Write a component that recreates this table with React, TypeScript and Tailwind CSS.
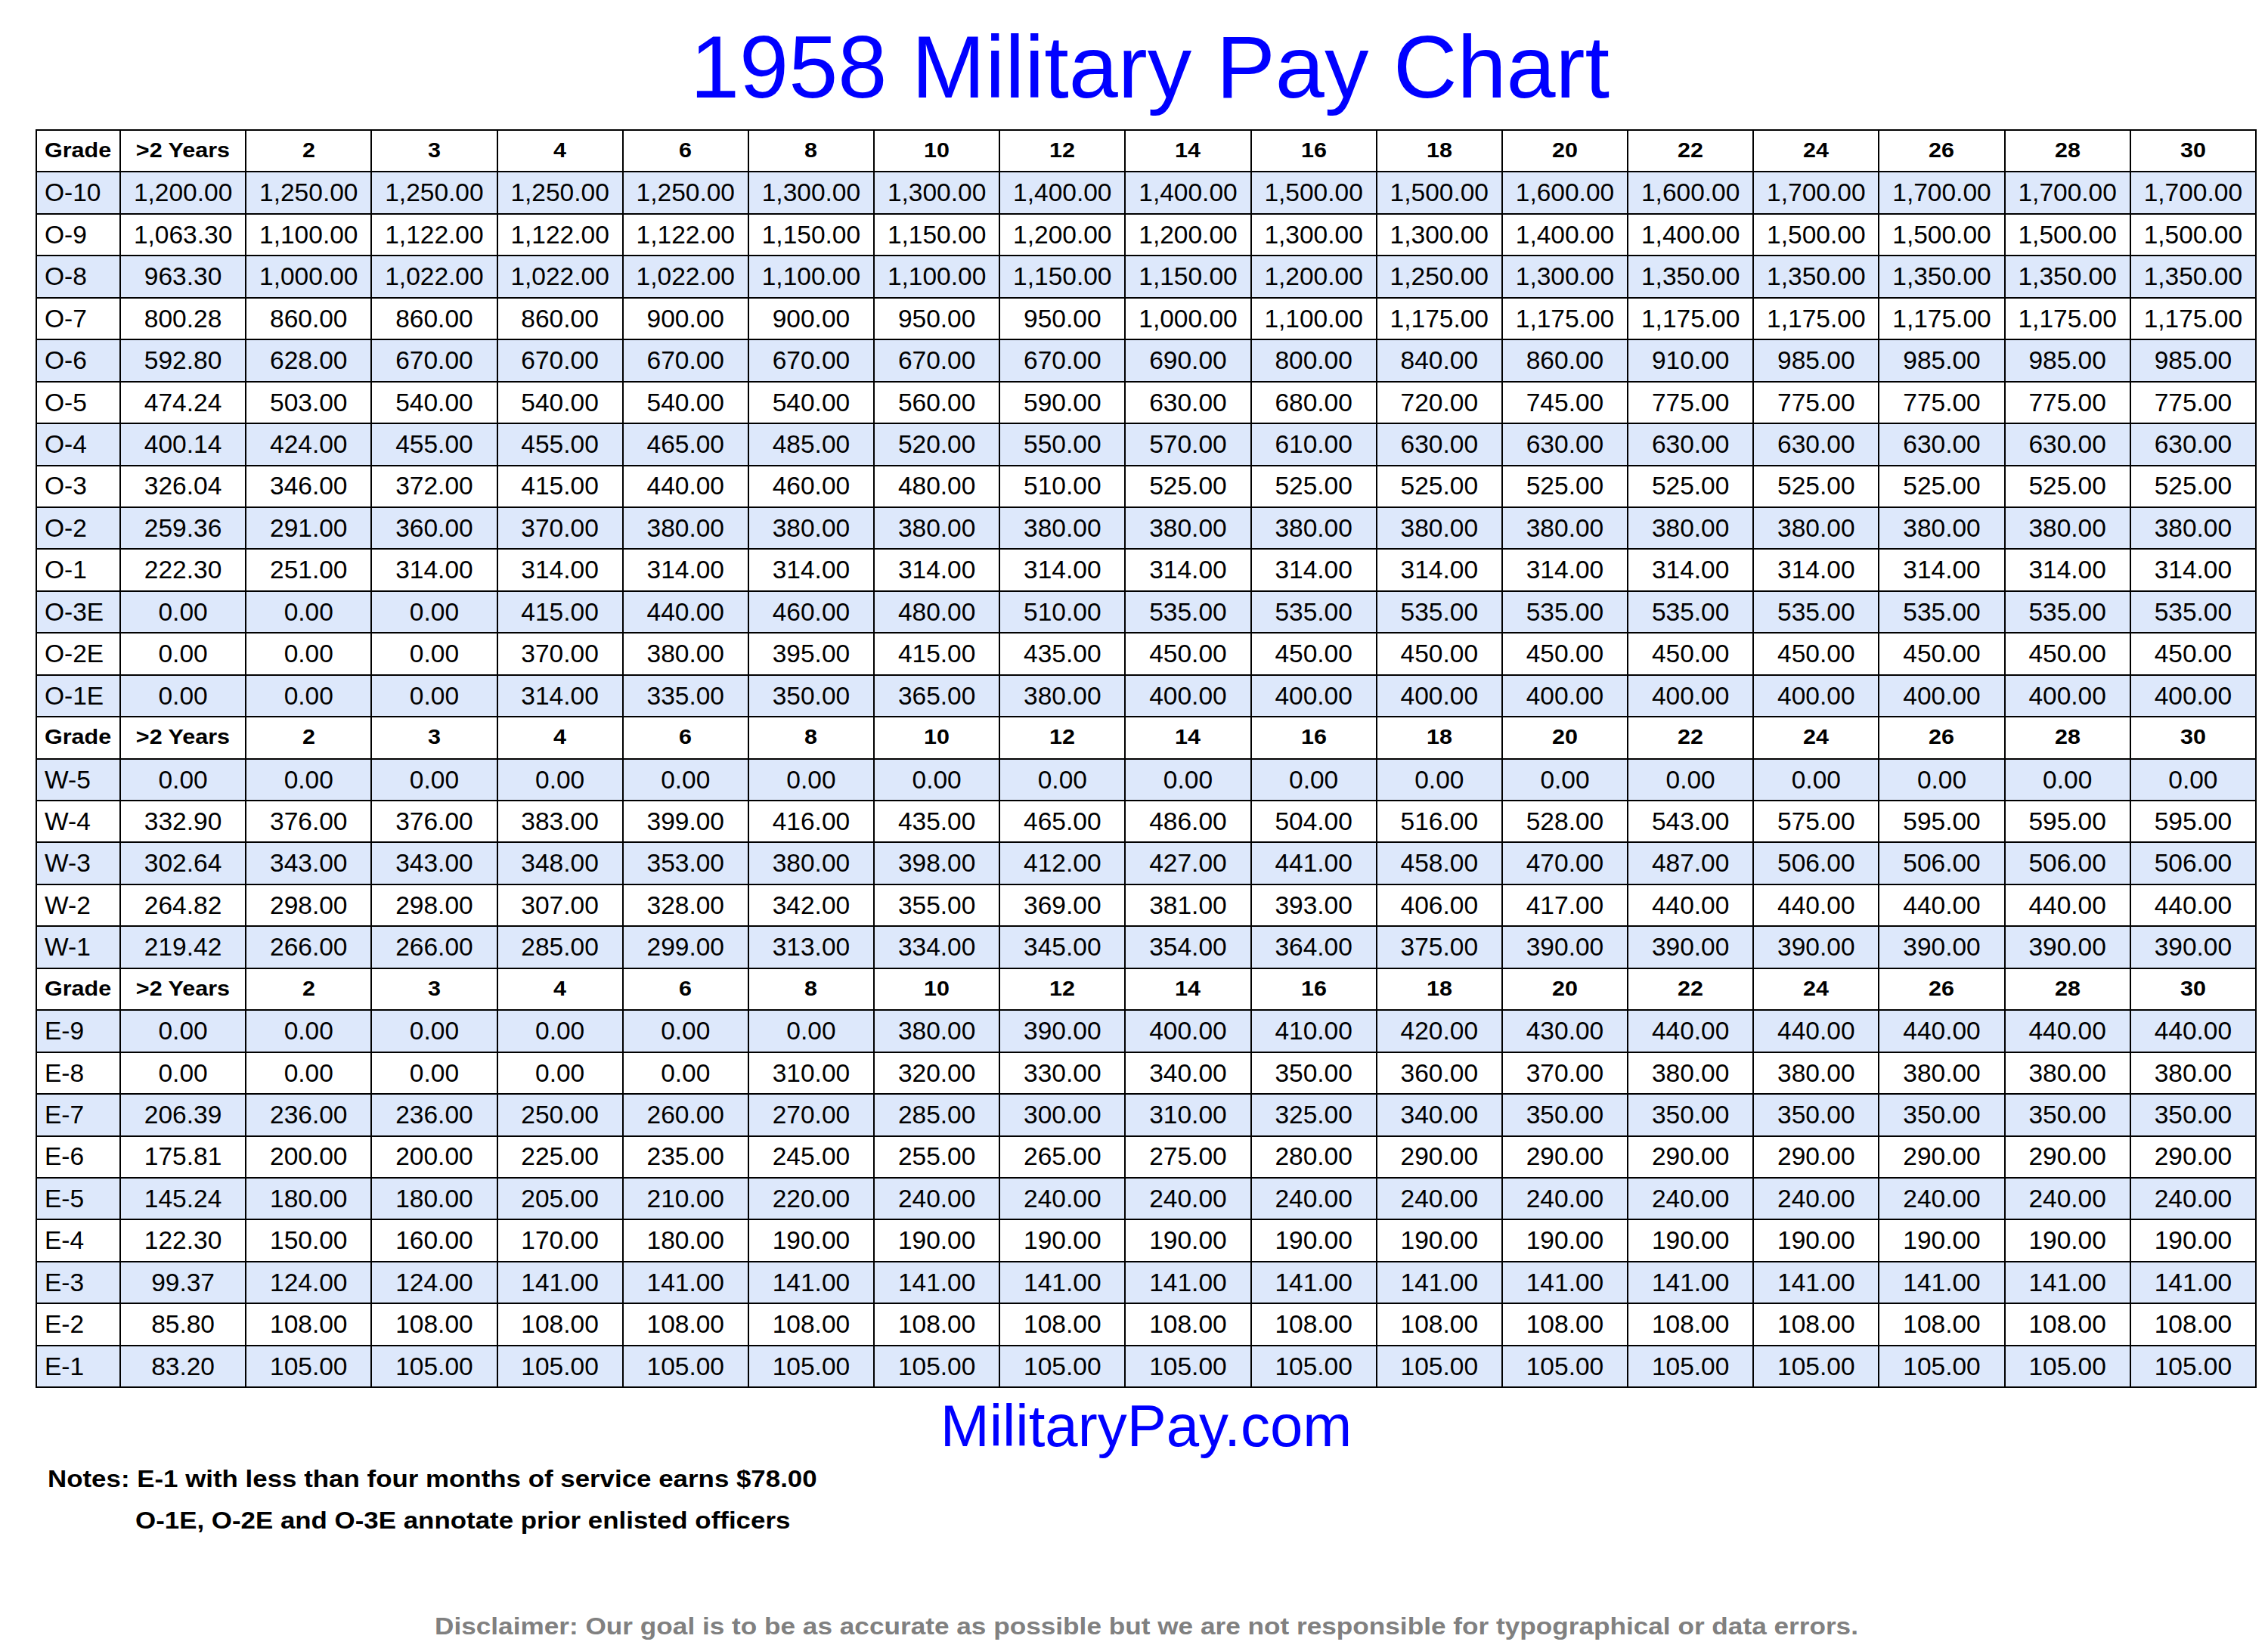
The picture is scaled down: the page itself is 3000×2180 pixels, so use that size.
import React from "react";

const headers = [">2 Years", "2", "3", "4", "6", "8", "10", "12", "14", "16", "18", "20", "22", "24", "26", "28", "30"];

const rep = (v: string, n: number) => Array.from({ length: n }, () => v);

type Row = [string, string[]];

const officers: Row[] = [
  ["O-10", ["1,200.00", "1,250.00", "1,250.00", "1,250.00", "1,250.00", "1,300.00", "1,300.00", "1,400.00", "1,400.00", "1,500.00", "1,500.00", "1,600.00", "1,600.00", "1,700.00", "1,700.00", "1,700.00", "1,700.00"]],
  ["O-9", ["1,063.30", "1,100.00", "1,122.00", "1,122.00", "1,122.00", "1,150.00", "1,150.00", "1,200.00", "1,200.00", "1,300.00", "1,300.00", "1,400.00", "1,400.00", "1,500.00", "1,500.00", "1,500.00", "1,500.00"]],
  ["O-8", ["963.30", "1,000.00", "1,022.00", "1,022.00", "1,022.00", "1,100.00", "1,100.00", "1,150.00", "1,150.00", "1,200.00", "1,250.00", "1,300.00", "1,350.00", "1,350.00", "1,350.00", "1,350.00", "1,350.00"]],
  ["O-7", ["800.28", "860.00", "860.00", "860.00", "900.00", "900.00", "950.00", "950.00", "1,000.00", "1,100.00", "1,175.00", "1,175.00", "1,175.00", "1,175.00", "1,175.00", "1,175.00", "1,175.00"]],
  ["O-6", ["592.80", "628.00", "670.00", "670.00", "670.00", "670.00", "670.00", "670.00", "690.00", "800.00", "840.00", "860.00", "910.00", "985.00", "985.00", "985.00", "985.00"]],
  ["O-5", ["474.24", "503.00", "540.00", "540.00", "540.00", "540.00", "560.00", "590.00", "630.00", "680.00", "720.00", "745.00", "775.00", "775.00", "775.00", "775.00", "775.00"]],
  ["O-4", ["400.14", "424.00", "455.00", "455.00", "465.00", "485.00", "520.00", "550.00", "570.00", "610.00", "630.00", "630.00", "630.00", "630.00", "630.00", "630.00", "630.00"]],
  ["O-3", ["326.04", "346.00", "372.00", "415.00", "440.00", "460.00", "480.00", "510.00", "525.00", "525.00", "525.00", "525.00", "525.00", "525.00", "525.00", "525.00", "525.00"]],
  ["O-2", ["259.36", "291.00", "360.00", "370.00", ...rep("380.00", 13)]],
  ["O-1", ["222.30", "251.00", ...rep("314.00", 15)]],
  ["O-3E", ["0.00", "0.00", "0.00", "415.00", "440.00", "460.00", "480.00", "510.00", ...rep("535.00", 9)]],
  ["O-2E", ["0.00", "0.00", "0.00", "370.00", "380.00", "395.00", "415.00", "435.00", ...rep("450.00", 9)]],
  ["O-1E", ["0.00", "0.00", "0.00", "314.00", "335.00", "350.00", "365.00", "380.00", ...rep("400.00", 9)]],
];

const warrant: Row[] = [
  ["W-5", rep("0.00", 17)],
  ["W-4", ["332.90", "376.00", "376.00", "383.00", "399.00", "416.00", "435.00", "465.00", "486.00", "504.00", "516.00", "528.00", "543.00", "575.00", "595.00", "595.00", "595.00"]],
  ["W-3", ["302.64", "343.00", "343.00", "348.00", "353.00", "380.00", "398.00", "412.00", "427.00", "441.00", "458.00", "470.00", "487.00", "506.00", "506.00", "506.00", "506.00"]],
  ["W-2", ["264.82", "298.00", "298.00", "307.00", "328.00", "342.00", "355.00", "369.00", "381.00", "393.00", "406.00", "417.00", "440.00", "440.00", "440.00", "440.00", "440.00"]],
  ["W-1", ["219.42", "266.00", "266.00", "285.00", "299.00", "313.00", "334.00", "345.00", "354.00", "364.00", "375.00", "390.00", "390.00", "390.00", "390.00", "390.00", "390.00"]],
];

const enlisted: Row[] = [
  ["E-9", [...rep("0.00", 6), "380.00", "390.00", "400.00", "410.00", "420.00", "430.00", ...rep("440.00", 5)]],
  ["E-8", [...rep("0.00", 5), "310.00", "320.00", "330.00", "340.00", "350.00", "360.00", "370.00", ...rep("380.00", 5)]],
  ["E-7", ["206.39", "236.00", "236.00", "250.00", "260.00", "270.00", "285.00", "300.00", "310.00", "325.00", "340.00", ...rep("350.00", 6)]],
  ["E-6", ["175.81", "200.00", "200.00", "225.00", "235.00", "245.00", "255.00", "265.00", "275.00", "280.00", ...rep("290.00", 7)]],
  ["E-5", ["145.24", "180.00", "180.00", "205.00", "210.00", "220.00", ...rep("240.00", 11)]],
  ["E-4", ["122.30", "150.00", "160.00", "170.00", "180.00", ...rep("190.00", 12)]],
  ["E-3", ["99.37", "124.00", "124.00", ...rep("141.00", 14)]],
  ["E-2", ["85.80", ...rep("108.00", 16)]],
  ["E-1", ["83.20", ...rep("105.00", 16)]],
];

function HeaderRow() {
  return (
    <tr className="h-[55.45px] bg-white">
      <td className="border-2 border-black pl-[10px] text-left font-bold text-[27px]">
        <span className="inline-block origin-left scale-x-[1.13]">Grade</span>
      </td>
      {headers.map((h, i) => (
        <td key={i} className="border-2 border-black text-center font-bold text-[27px]">
          <span className="inline-block origin-center scale-x-[1.13]">{h}</span>
        </td>
      ))}
    </tr>
  );
}

function DataRows({ rows }: { rows: Row[] }) {
  return (
    <>
      {rows.map(([grade, vals], r) => (
        <tr key={grade} className={r % 2 === 0 ? "h-[55.45px] bg-[#dde8fb]" : "h-[55.45px] bg-white"}>
          <td className="border-2 border-black pl-[10px] text-left text-[33.5px]">{grade}</td>
          {vals.map((v, i) => (
            <td key={i} className="border-2 border-black text-center text-[33.5px]">
              {v}
            </td>
          ))}
        </tr>
      ))}
    </>
  );
}

export default function App() {
  return (
    <div className="w-[3000px] h-[2180px] bg-white font-['Liberation_Sans',Arial,sans-serif] text-black">
      <div className="ml-[47px] w-[2938px] pt-[30px] flex flex-col">
        <h1 className="pl-[10px] text-center text-[117px] leading-[117px] font-normal text-[#0000ff]">
          1958 Military Pay Chart
        </h1>
        <table className="mt-[24px] w-[2938px] table-fixed border-collapse leading-none">
          <colgroup>
            <col className="w-[111px]" />
            {headers.map((h) => (
              <col key={h} />
            ))}
          </colgroup>
          <tbody>
            <HeaderRow />
            <DataRows rows={officers} />
            <HeaderRow />
            <DataRows rows={warrant} />
            <HeaderRow />
            <DataRows rows={enlisted} />
          </tbody>
        </table>
        <div className="mt-[12px] text-center text-[78px] leading-[77px] text-[#0000ff]">MilitaryPay.com</div>
        <div className="mt-[4px] pl-[16px] flex flex-col items-start font-bold text-[32px] leading-[55px] text-black">
          <div className="origin-left scale-x-[1.09]">Notes: E-1 with less than four months of service earns $78.00</div>
          <div className="ml-[116px] origin-left scale-x-[1.09]">O-1E, O-2E and O-3E annotate prior enlisted officers</div>
        </div>
        <div className="mt-[97px] flex justify-center font-bold text-[31px] leading-[31px] text-[#808080]">
          <div className="origin-center scale-x-[1.135]">
            Disclaimer: Our goal is to be as accurate as possible but we are not responsible for typographical or data errors.
          </div>
        </div>
      </div>
    </div>
  );
}
